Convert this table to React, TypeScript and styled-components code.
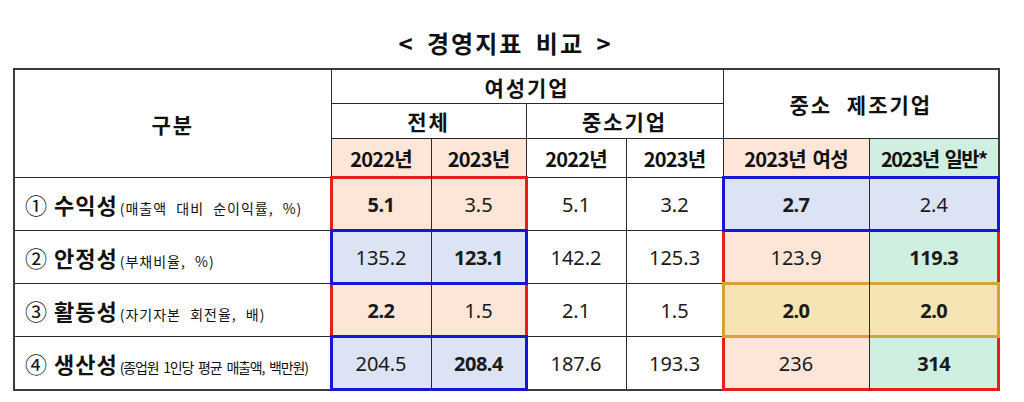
import styled, { createGlobalStyle, css } from "styled-components";

const GlobalStyle = createGlobalStyle`
  body {
    margin: 0;
    background: #ffffff;
    font-family: "Noto Sans CJK KR", "Noto Sans", sans-serif;
    color: #111111;
  }
`;

type Fill = "peach" | "blue" | "green" | "gold" | "none";
type Box = "red" | "blue" | "gold";

const fills: Record<Fill, string> = {
  peach: "#fde5d8",
  blue: "#dce3f4",
  green: "#cfefe0",
  gold: "#f6e4b4",
  none: "#ffffff",
};

const boxes: Record<Box, string> = {
  red: "#e61e1e",
  blue: "#1616d6",
  gold: "#d4a437",
};

const Page = styled.div`
  width: 985px;
  padding-left: 13px;
`;

const Title = styled.h1`
  height: 68px;
  margin: 0;
  display: flex;
  align-items: center;
  justify-content: center;
  padding-top: 16px;
  box-sizing: border-box;
  font-size: 24px;
  font-weight: 700;
  letter-spacing: 2px;
  word-spacing: 5px;
`;

const Table = styled.table`
  width: 985px;
  border-collapse: collapse;
  table-layout: fixed;
  border: 2px solid #3c3c3c;
`;

const HeadCell = styled.th<{ $fill?: Fill; $h?: number; $size?: number; $spaced?: boolean; $squeeze?: number }>`
  height: ${(p) => p.$h ?? 33}px;
  padding: 0;
  border: 1px solid #2a2a2a;
  background: ${(p) => fills[p.$fill ?? "none"]};
  font-size: ${(p) => p.$size ?? 21}px;
  font-weight: 700;
  text-align: center;
  white-space: nowrap;
  letter-spacing: ${(p) => (p.$spaced ? "2px" : `${-(p.$squeeze ?? 0.8)}px`)};
  word-spacing: ${(p) => (p.$spaced ? "8px" : "3px")};
`;

const LabelCell = styled.td`
  height: 52px;
  padding: 0 0 0 10px;
  border: 1px solid #2a2a2a;
  white-space: nowrap;
`;

const Circle = styled.span`
  font-size: 22px;
  margin-right: 7px;
`;

const Name = styled.span`
  font-size: 22px;
  font-weight: 700;
  letter-spacing: 1px;
  margin-right: 2px;
`;

const Note = styled.span<{ $tight?: boolean }>`
  font-size: 14px;
  letter-spacing: ${(p) => (p.$tight ? "-1.2px" : "1px")};
  word-spacing: ${(p) => (p.$tight ? "3px" : "5px")};
`;

const ValueCell = styled.td<{ $fill: Fill; $bold?: boolean; $box?: Box; $edge?: "left" | "right" }>`
  position: relative;
  padding: 0;
  border: 1px solid #2a2a2a;
  background: ${(p) => fills[p.$fill]};
  text-align: center;
  font-family: "Noto Sans", "Noto Sans CJK KR", sans-serif;
  font-size: 20px;
  font-weight: ${(p) => (p.$bold ? 700 : 400)};
  letter-spacing: ${(p) => (p.$bold ? "-0.5px" : "0")};
  color: #1a1a1a;

  ${(p) =>
    p.$box &&
    css`
      &::after {
        content: "";
        position: absolute;
        top: -2px;
        bottom: -2px;
        left: ${p.$edge === "left" ? "-2px" : "0"};
        right: ${p.$edge === "right" ? "-2px" : "0"};
        border-top: 3px solid ${boxes[p.$box]};
        border-bottom: 3px solid ${boxes[p.$box]};
        ${p.$edge === "left" ? "border-left" : "border-right"}: 3px solid ${boxes[p.$box]};
        z-index: ${p.$box === "red" ? 1 : 2};
        pointer-events: none;
      }
    `}
`;

interface Value {
  v: string;
  fill: Fill;
  bold?: boolean;
}

interface Row {
  no: string;
  name: string;
  note: string;
  tight?: boolean;
  total: [Value, Value];
  totalBox: Box;
  sme: [string, string];
  mfg: [Value, Value];
  mfgBox: Box;
}

const rows: Row[] = [
  {
    no: "①",
    name: "수익성",
    note: "(매출액 대비 순이익률, %)",
    total: [
      { v: "5.1", fill: "peach", bold: true },
      { v: "3.5", fill: "peach" },
    ],
    totalBox: "red",
    sme: ["5.1", "3.2"],
    mfg: [
      { v: "2.7", fill: "blue", bold: true },
      { v: "2.4", fill: "blue" },
    ],
    mfgBox: "blue",
  },
  {
    no: "②",
    name: "안정성",
    note: "(부채비율, %)",
    total: [
      { v: "135.2", fill: "blue" },
      { v: "123.1", fill: "blue", bold: true },
    ],
    totalBox: "blue",
    sme: ["142.2", "125.3"],
    mfg: [
      { v: "123.9", fill: "peach" },
      { v: "119.3", fill: "green", bold: true },
    ],
    mfgBox: "red",
  },
  {
    no: "③",
    name: "활동성",
    note: "(자기자본 회전율, 배)",
    total: [
      { v: "2.2", fill: "peach", bold: true },
      { v: "1.5", fill: "peach" },
    ],
    totalBox: "red",
    sme: ["2.1", "1.5"],
    mfg: [
      { v: "2.0", fill: "gold", bold: true },
      { v: "2.0", fill: "gold", bold: true },
    ],
    mfgBox: "gold",
  },
  {
    no: "④",
    name: "생산성",
    note: "(종업원 1인당 평균 매출액, 백만원)",
    tight: true,
    total: [
      { v: "204.5", fill: "blue" },
      { v: "208.4", fill: "blue", bold: true },
    ],
    totalBox: "blue",
    sme: ["187.6", "193.3"],
    mfg: [
      { v: "236", fill: "peach" },
      { v: "314", fill: "green", bold: true },
    ],
    mfgBox: "red",
  },
];

function Pair({ values, box }: { values: [Value, Value]; box: Box }) {
  return (
    <>
      <ValueCell $fill={values[0].fill} $bold={values[0].bold} $box={box} $edge="left">
        {values[0].v}
      </ValueCell>
      <ValueCell $fill={values[1].fill} $bold={values[1].bold} $box={box} $edge="right">
        {values[1].v}
      </ValueCell>
    </>
  );
}

export default function App() {
  return (
    <>
      <GlobalStyle />
      <Page>
        <Title>&lt; 경영지표 비교 &gt;</Title>
        <Table>
          <colgroup>
            <col style={{ width: 317 }} />
            <col style={{ width: 100 }} />
            <col style={{ width: 95 }} />
            <col style={{ width: 100 }} />
            <col style={{ width: 97 }} />
            <col style={{ width: 146 }} />
            <col style={{ width: 130 }} />
          </colgroup>
          <thead>
            <tr>
              <HeadCell rowSpan={3} $spaced>
                구분
              </HeadCell>
              <HeadCell colSpan={4} $h={33} $spaced>
                여성기업
              </HeadCell>
              <HeadCell colSpan={2} rowSpan={2} $spaced>
                중소 제조기업
              </HeadCell>
            </tr>
            <tr>
              <HeadCell colSpan={2} $h={34} $spaced>
                전체
              </HeadCell>
              <HeadCell colSpan={2} $h={34} $spaced>
                중소기업
              </HeadCell>
            </tr>
            <tr>
              <HeadCell $fill="peach" $h={38} $size={20}>
                2022년
              </HeadCell>
              <HeadCell $fill="peach" $h={38} $size={20}>
                2023년
              </HeadCell>
              <HeadCell $h={38} $size={20}>
                2022년
              </HeadCell>
              <HeadCell $h={38} $size={20}>
                2023년
              </HeadCell>
              <HeadCell $fill="peach" $h={38} $size={20}>
                2023년 여성
              </HeadCell>
              <HeadCell $fill="green" $h={38} $size={20} $squeeze={1.6}>
                2023년 일반*
              </HeadCell>
            </tr>
          </thead>
          <tbody>
            {rows.map((r) => (
              <tr key={r.name}>
                <LabelCell>
                  <Circle>{r.no}</Circle>
                  <Name>{r.name}</Name>
                  <Note $tight={r.tight}>{r.note}</Note>
                </LabelCell>
                <Pair values={r.total} box={r.totalBox} />
                <ValueCell $fill="none">{r.sme[0]}</ValueCell>
                <ValueCell $fill="none">{r.sme[1]}</ValueCell>
                <Pair values={r.mfg} box={r.mfgBox} />
              </tr>
            ))}
          </tbody>
        </Table>
      </Page>
    </>
  );
}
